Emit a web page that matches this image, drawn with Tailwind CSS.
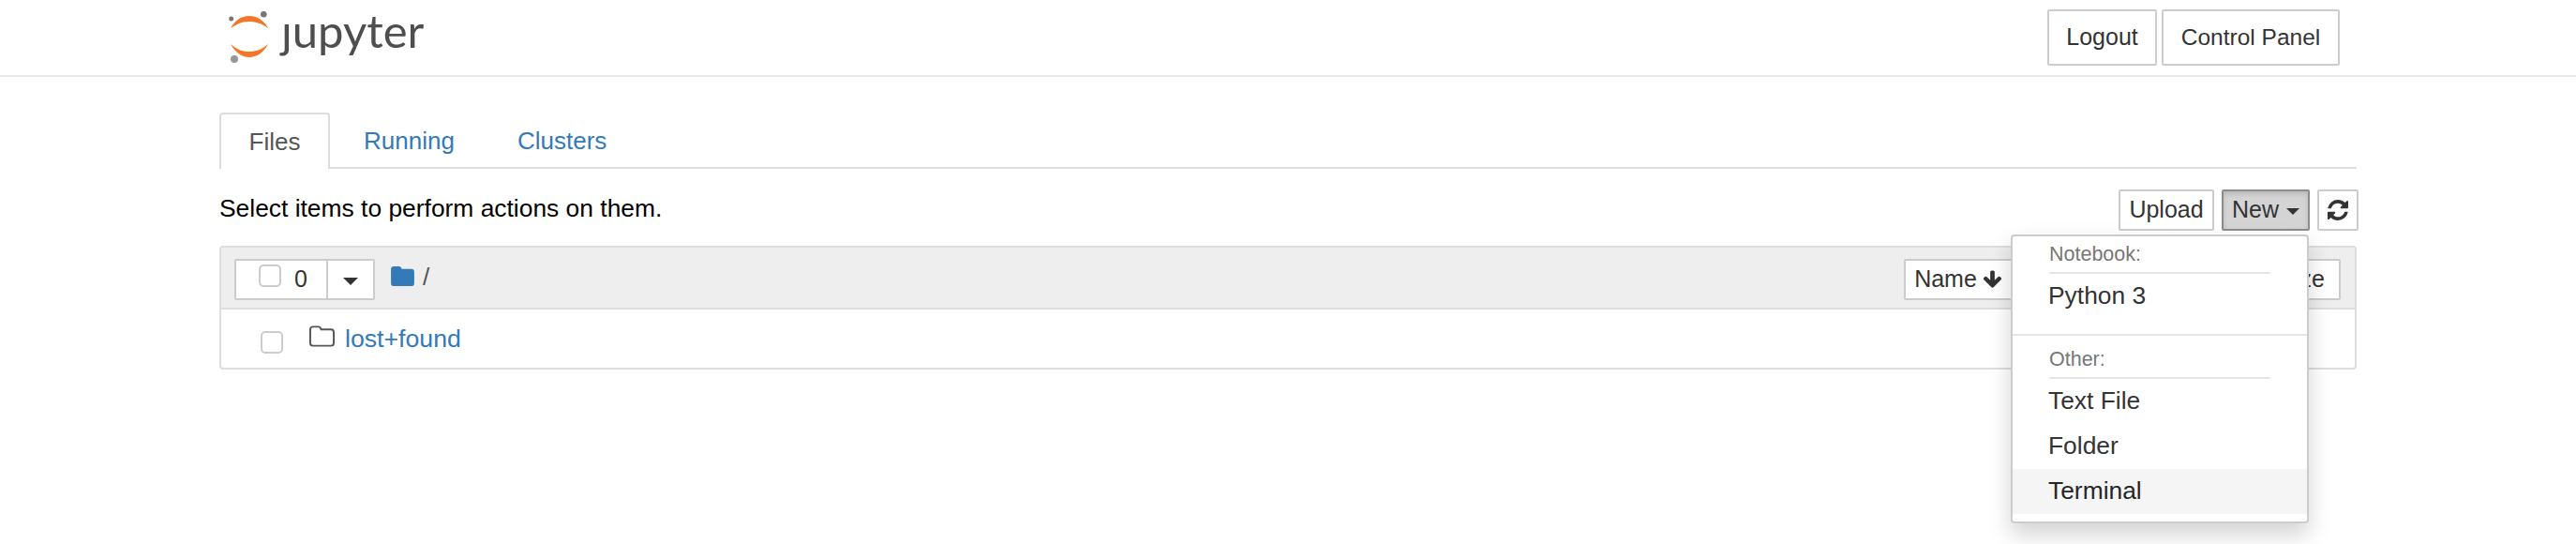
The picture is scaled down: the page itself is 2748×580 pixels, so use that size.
<!DOCTYPE html>
<html lang="en">
<head>
    <meta charset="UTF-8">
    <meta name="viewport" content="width=device-width, initial-scale=1.0">
    <title>Home</title>
    <script src="https://cdn.jsdelivr.net/npm/@tailwindcss/browser@4"></script>
</head>
<body class="bg-white text-[#333] font-['Liberation_Sans',Arial,sans-serif] min-h-[580px]">
    <!-- header -->
    <header class="h-[82px] border-b-2 border-[#e7e7e7] pl-[240px] pr-[252px] flex justify-between">
        <a class="flex items-start">
            <svg width="50" height="70" viewBox="0 0 50 70">
                <path d="M6 30 C11 21 18 17 26 17 C34 17 41 21 46 30 C39 25 33 23 26 23 C19 23 13 25 6 30 Z" fill="#f37726"/>
                <path d="M6 47 C11 56 18 61 26 61 C34 61 41 56 46 47 C39 53 33 55 26 55 C19 55 13 53 6 47 Z" fill="#f37726"/>
                <circle cx="6.7" cy="20" r="2.5" fill="#767677"/>
                <circle cx="41.3" cy="15.3" r="3.3" fill="#767677"/>
                <circle cx="10" cy="63" r="4" fill="#989798"/>
            </svg>
            <span class="ml-[10px] mt-[4px] font-['Lato',sans-serif] text-[49px] leading-[56px] text-[#4e4e4e]">ȷupyter</span>
        </a>
        <div class="flex gap-[5px] pt-[10px]">
            <button class="h-[60px] w-[117px] border-2 border-[#ccc] rounded-[2px] text-[25px] text-[#333]">Logout</button>
            <button class="h-[60px] w-[190px] border-2 border-[#ccc] rounded-[2px] text-[24.5px] text-[#333]">Control Panel</button>
        </div>
    </header>

    <main class="relative pt-[38px] ml-[234px] w-[2280px]">
        <!-- tabs -->
        <nav class="h-[60px] border-b-2 border-[#ddd] flex text-[26px]">
            <a class="h-[60px] w-[118px] border-2 border-b-0 border-[#ddd] rounded-t-[4px] bg-white text-[#555] flex items-center justify-center">Files</a>
            <a class="h-[58px] w-[200px] pl-[36px] pt-[2px] text-[#337ab7] flex items-center">Running</a>
            <a class="h-[58px] pt-[2px] text-[#337ab7] flex items-center">Clusters</a>
        </nav>

        <!-- toolbar -->
        <div class="h-[82px] flex justify-between pt-[22px]">
            <p class="mt-[2px] text-[26.4px] leading-[36px] text-black">Select items to perform actions on them.</p>
            <div class="flex -mr-[2px]">
                <button class="h-[44px] w-[102px] border-2 border-[#ccc] rounded-[2px] text-[25px]">Upload</button>
                <button class="ml-[8px] h-[44px] w-[94px] border-2 border-[#8c8c8c] rounded-[2px] bg-[#d4d4d4] shadow-[inset_0_3px_5px_rgba(0,0,0,0.125)] text-[25px] flex items-center justify-center gap-[8px]">
                    New <span class="mt-[3px] border-x-[7px] border-t-[7px] border-x-transparent border-t-[#333]"></span>
                </button>
                <button class="ml-[8px] h-[44px] w-[44px] border-2 border-[#ccc] rounded-[2px] flex items-center justify-center">
                    <svg width="22" height="22" viewBox="0 0 1536 1536" fill="#333"><path d="M1511 928q0 5-1 7-64 268-268 434.500t-478 166.500q-146 0-282.500-55t-243.500-157l-129 129q-19 19-45 19t-45-19-19-45v-448q0-26 19-45t45-19h448q26 0 45 19t19 45-19 45l-137 137q71 66 161 102t187 36q134 0 250-65t186-179q11-17 53-117 8-23 30-23h192q13 0 22.500 9.500t9.500 22.500zm25-800v448q0 26-19 45t-45 19h-448q-26 0-45-19t-19-45 19-45l138-138q-148-137-349-137-134 0-250 65t-186 179q-11 17-53 117-8 23-30 23h-199q-13 0-22.500-9.500t-9.500-22.500v-7q65-268 270-434.500t480-166.500q146 0 284 55.500t245 156.500l130-129q19-19 45-19t45 19 19 45z"/></svg>
                </button>
            </div>
        </div>

        <!-- file list -->
        <section class="border-2 border-[#ddd] rounded-[4px] text-[26px]">
            <div class="h-[66px] bg-[#eee] border-b-2 border-[#ddd] flex items-start justify-between pt-[12px] pl-[14px] pr-[15px]">
                <div class="flex items-center">
                    <div class="h-[44px] w-[150px] flex border-2 border-[#ccc] rounded-[2px] bg-white">
                        <div class="w-[98px] border-r-2 border-[#ccc] flex items-center pl-[24px] gap-[14px]">
                            <span class="-mt-[8px] w-[24px] h-[24px] border-2 border-[#ccc] rounded-[5px] bg-white"></span>
                            <span class="text-[25px]">0</span>
                        </div>
                        <div class="flex-1 flex items-center justify-center">
                            <span class="mt-[3px] border-x-[8px] border-t-[8px] border-x-transparent border-t-[#333]"></span>
                        </div>
                    </div>
                    <svg class="ml-[17px] -mt-[8px]" width="25" height="21" viewBox="0 0 26 22"><path d="M3 0h6c1.500 0 2.500 1 3 3h11c1.700 0 3 1.300 3 3v13c0 1.700-1.300 3-3 3H3c-1.700 0-3-1.300-3-3V3c0-1.700 1.300-3 3-3z" fill="#337ab7"/></svg>
                    <span class="ml-[9px] -mt-[6px] text-[#555]">/</span>
                </div>
                <div class="flex">
                    <button class="h-[44px] w-[116px] border-2 border-[#ccc] bg-white rounded-l-[2px] text-[25px] flex items-center justify-center gap-[6px]">
                        Name
                        <svg width="21" height="22" viewBox="0 0 1664 1792" fill="#333"><path d="M1611 832q0 53-37 90l-651 652q-39 37-91 37-53 0-90-37l-651-652q-38-36-38-90 0-53 38-91l74-75q39-37 91-37 53 0 90 37l294 294v-704q0-52 38-90t90-38h128q52 0 90 38t38 90v704l294-294q37-37 90-37 52 0 91 37l75 75q37 39 37 91z"/></svg>
                    </button>
                    <button class="h-[44px] w-[352px] -ml-[2px] border-2 border-[#ccc] bg-white rounded-r-[2px] text-[25px] text-right pr-[15px]">Size</button>
                </div>
            </div>
            <div class="h-[62px] flex items-center pl-[42px]">
                <span class="mt-[8px] w-[24px] h-[24px] border-2 border-[#ccc] rounded-[5px] bg-white"></span>
                <svg class="ml-[28px] -mt-[5px]" width="27" height="23" viewBox="0 0 28 23" fill="none" stroke="#555" stroke-width="2"><path d="M4 1h6c1.500 0 2.500 1 3 3h11c1.700 0 3 1.200 3 3v12c0 1.700-1.300 3-3 3H4c-1.700 0-3-1.300-3-3V4c0-1.700 1.300-3 3-3z"/></svg>
                <a class="ml-[11px] text-[26.7px] text-[#337ab7]">lost+found</a>
            </div>
        </section>

        <!-- new dropdown -->
        <div class="absolute left-[1911px] top-[168px] w-[318px] h-[308px] bg-white border-2 border-[#ccc] rounded-[4px] shadow-[0_12px_24px_rgba(0,0,0,0.175)]">
            <div class="mx-[39px] h-[40px] pt-[5px] border-b-2 border-[#e5e5e5] text-[21.5px] leading-[28px] text-[#777]">Notebook:</div>
            <div class="px-[38px] h-[46px] pt-[2px] flex items-center text-[26.4px] text-[#333]">Python 3</div>
            <div class="mt-[18px] h-[2px] bg-[#e5e5e5]"></div>
            <div class="mx-[39px] h-[46px] pt-[11px] border-b-2 border-[#e5e5e5] text-[21.5px] leading-[28px] text-[#777]">Other:</div>
            <div class="px-[38px] h-[48px] flex items-center text-[26.4px] text-[#333]">Text File</div>
            <div class="px-[38px] h-[48px] flex items-center text-[26.4px] text-[#333]">Folder</div>
            <div class="px-[38px] h-[48px] flex items-center text-[26.4px] text-[#262626] bg-[#f5f5f5]">Terminal</div>
        </div>
    </main>
</body>
</html>
